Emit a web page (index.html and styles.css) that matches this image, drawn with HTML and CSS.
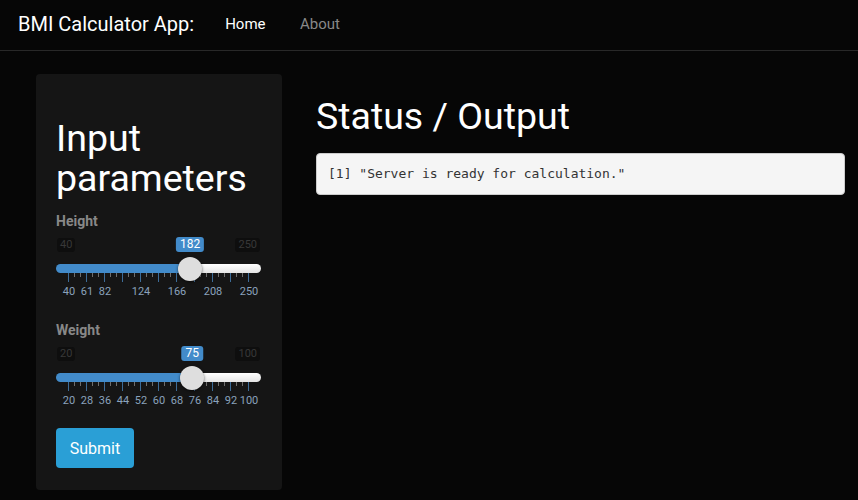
FILE: index.html
```html
<!DOCTYPE html>
<html lang="en">
<head>
<meta charset="utf-8">
<title>BMI Calculator App</title>
<link rel="stylesheet" href="styles.css">
</head>
<body>
<nav class="navbar">
  <span class="brand">BMI Calculator App:</span>
  <a class="nav-link active" href="#">Home</a>
  <a class="nav-link" href="#">About</a>
</nav>
<div class="page">
  <aside class="well">
    <h2 class="well-title">Input parameters</h2>
    <div class="group">
      <label class="ctl-label">Height</label>
      <div class="minmax"><span class="mm">40</span><span class="mm">250</span></div>
      <div class="track" style="--v: 0.6762">
        <div class="rail">
          <span class="value">182</span>
          <span class="handle"></span>
        </div>
      </div>
      <div class="ticks"></div>
      <div class="labels">
        <span>40</span><span>61</span><span>82</span><span></span><span>124</span><span></span><span>166</span><span></span><span>208</span><span></span><span>250</span>
      </div>
    </div>
    <div class="group">
      <label class="ctl-label">Weight</label>
      <div class="minmax"><span class="mm">20</span><span class="mm">100</span></div>
      <div class="track" style="--v: 0.6875">
        <div class="rail">
          <span class="value">75</span>
          <span class="handle"></span>
        </div>
      </div>
      <div class="ticks"></div>
      <div class="labels">
        <span>20</span><span>28</span><span>36</span><span>44</span><span>52</span><span>60</span><span>68</span><span>76</span><span>84</span><span>92</span><span>100</span>
      </div>
    </div>
    <button class="btn" type="button">Submit</button>
  </aside>
  <main class="main">
    <h3 class="main-title">Status / Output</h3>
    <pre class="output">[1] "Server is ready for calculation."</pre>
  </main>
</div>
</body>
</html>
```
FILE: styles.css
```css
* { box-sizing: border-box; }
html, body { margin: 0; padding: 0; }
body {
  background: #060606;
  color: #888;
  font-family: Roboto, "Liberation Sans", Arial, sans-serif;
  font-size: 14px;
  line-height: 20px;
  width: 858px;
  height: 500px;
  overflow: hidden;
}
.navbar {
  height: 51px;
  border-bottom: 1px solid #282828;
  display: flex;
  align-items: center;
  padding-left: 18px;
  padding-bottom: 2px;
}
.brand {
  color: #fff;
  font-size: 20px;
  line-height: 24px;
  margin-right: 31px;
}
.nav-link {
  color: #888;
  text-decoration: none;
  font-size: 15px;
  line-height: 20px;
  margin-right: 34.5px;
  margin-top: -1px;
}
.nav-link.active { color: #fff; }
.page {
  display: flex;
  align-items: flex-start;
  padding: 23px 13px 0 36px;
  gap: 34px;
}
.well {
  width: 246px;
  flex: none;
  background: #151515;
  border-radius: 4px;
  padding: 19px 20px 22px 20px;
}
.well-title {
  margin: 25px 0 13px 0;
  color: #fff;
  font-weight: 400;
  font-size: 37.5px;
  line-height: 40px;
}
.group { margin-bottom: 22px; }
.ctl-label {
  display: block;
  font-weight: 700;
  font-size: 14px;
  line-height: 20px;
  color: #888;
}
.minmax {
  margin-top: 7px;
  height: 14px;
  display: flex;
  justify-content: space-between;
  padding: 0 2px 0 1px;
}
.mm {
  background: #0e0e0e;
  color: #383838;
  font-size: 11px;
  line-height: 14px;
  padding: 0 3px;
  border-radius: 3px;
}
.track {
  margin-top: 12px;
  width: 205px;
  height: 9px;
  border-radius: 5px;
  background:
    linear-gradient(to right, #428bca 0, #428bca calc(12px + 180px * var(--v)), transparent calc(12px + 180px * var(--v))),
    linear-gradient(to bottom, #ffffff, #e4e4e4);
  padding: 0 13px 0 12px;
}
.rail {
  position: relative;
  height: 9px;
}
.handle {
  position: absolute;
  left: calc(180px * var(--v));
  top: 50%;
  width: 24px;
  height: 24px;
  margin: -12px 0 0 -11.5px;
  border-radius: 50%;
  background: #dedede;
  box-shadow: 0 1px 3px rgba(0, 0, 0, 0.6);
}
.value {
  position: absolute;
  left: calc(180px * var(--v) + 0.5px);
  bottom: calc(100% + 12px);
  transform: translateX(-50%);
  background: #428bca;
  color: #fff;
  font-size: 12px;
  line-height: 15px;
  padding: 0 4px;
  border-radius: 3px;
  white-space: nowrap;
}
.ticks {
  margin-left: 12px;
  width: 181px;
  height: 9px;
  background:
    repeating-linear-gradient(to right, #3d6c98 0 1px, transparent 1px 18px) top left / 181px 9px no-repeat,
    repeating-linear-gradient(to right, #6e6e6e 0 1px, transparent 1px 6px) top left / 181px 4px no-repeat;
}
.labels {
  margin-top: 4px;
  margin-left: 4px;
  display: grid;
  grid-template-columns: repeat(11, 18px);
  justify-items: center;
  font-size: 11px;
  line-height: 12px;
  color: #8aa2bc;
}
.labels span { white-space: nowrap; }
.btn {
  display: block;
  width: 78px;
  height: 40px;
  margin-top: -1px;
  border: none;
  border-radius: 4px;
  background: #2a9fd6;
  color: #fff;
  font-family: Roboto, "Liberation Sans", Arial, sans-serif;
  font-size: 16px;
  padding: 0;
}
.main {
  flex: 1;
  min-width: 0;
}
.main-title {
  margin: 22px 0 17px 0;
  color: #fff;
  font-weight: 400;
  font-size: 37.5px;
  line-height: 40px;
}
.output {
  margin: 0;
  background: #f5f5f5;
  border: 1px solid #cccccc;
  border-radius: 4px;
  padding: 10px 11px;
  color: #333;
  font-family: "DejaVu Sans Mono", "Liberation Mono", monospace;
  font-size: 13px;
  line-height: 20px;
}
```
